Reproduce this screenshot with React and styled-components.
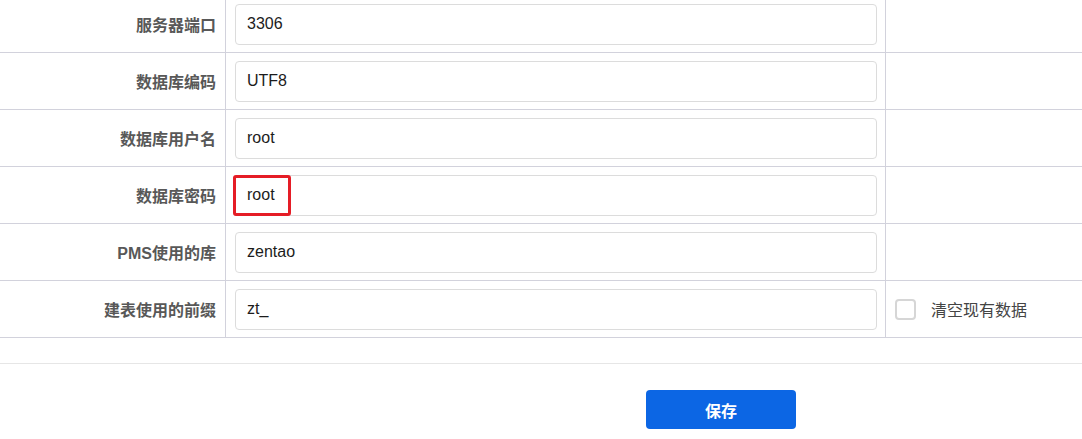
import styled, { createGlobalStyle } from 'styled-components';

const GlobalStyle = createGlobalStyle`
  html, body {
    margin: 0;
    padding: 0;
    background: #fff;
    overflow: hidden;
  }
  body {
    font-family: "Liberation Sans", "Noto Sans CJK SC", sans-serif;
  }
`;

const fields = [
  { label: '服务器端口', value: '3306' },
  { label: '数据库编码', value: 'UTF8' },
  { label: '数据库用户名', value: 'root' },
  { label: '数据库密码', value: 'root', marked: true },
  { label: 'PMS使用的库', value: 'zentao' },
  { label: '建表使用的前缀', value: 'zt_', clearOption: true },
];

function App() {
  return (
    <>
      <GlobalStyle />
      <Page>
        <Table>
          {fields.map((f, i) => (
            <Row key={f.label} first={i === 0}>
              <Label>{f.label}</Label>
              <InputCell>
                <InputWrap>
                  <Input defaultValue={f.value} />
                  {f.marked && <Mark />}
                </InputWrap>
              </InputCell>
              <Extra>
                {f.clearOption && (
                  <CheckLabel>
                    <CheckBox />
                    <span>清空现有数据</span>
                  </CheckLabel>
                )}
              </Extra>
            </Row>
          ))}
        </Table>
        <FootLine />
        <Actions>
          <SaveButton>保存</SaveButton>
        </Actions>
      </Page>
    </>
  );
}

export default App;

const Page = styled.div`
  width: 1082px;
  margin-top: -5px;
`;

const Table = styled.div`
  display: flex;
  flex-direction: column;
`;

const Row = styled.div`
  display: grid;
  grid-template-columns: 226px 660px 1fr;
  height: 57px;
  box-sizing: border-box;
  border-bottom: 1px solid #d2d2dc;
  ${({ first }) => (first ? 'border-top: 1px solid #d2d2dc; height: 58px;' : '')}
`;

const Label = styled.div`
  display: flex;
  align-items: center;
  justify-content: flex-end;
  padding-right: 9px;
  border-right: 1px solid #d2d2dc;
  box-sizing: border-box;
  font-size: 16px;
  font-weight: bold;
  color: #585858;
`;

const InputCell = styled.div`
  display: flex;
  align-items: center;
  padding: 0 8px 0 9px;
  border-right: 1px solid #d2d2dc;
  box-sizing: border-box;
`;

const InputWrap = styled.div`
  position: relative;
  width: 100%;
`;

const Input = styled.input`
  display: block;
  width: 100%;
  height: 41px;
  box-sizing: border-box;
  border: 1px solid #dcdcdc;
  border-radius: 4px;
  padding: 0 11px;
  font-family: "Liberation Sans", "Noto Sans CJK SC", sans-serif;
  font-size: 16px;
  color: #1c1c1c;
  background: #fff;
  outline: none;
`;

const Mark = styled.div`
  position: absolute;
  left: -2px;
  top: 0;
  width: 58px;
  height: 41px;
  box-sizing: border-box;
  border: 3px solid #e51d26;
  border-radius: 3px;
  pointer-events: none;
`;

const Extra = styled.div`
  display: flex;
  align-items: center;
  padding-left: 9px;
`;

const CheckLabel = styled.label`
  display: flex;
  align-items: center;
  gap: 15px;
  font-size: 16px;
  color: #444;
`;

const CheckBox = styled.span`
  display: block;
  width: 21px;
  height: 21px;
  box-sizing: border-box;
  border: 2px solid #d6d6d6;
  border-radius: 4px;
  background: #fff;
`;

const FootLine = styled.div`
  height: 25px;
  border-bottom: 1px solid #e6e6e6;
`;

const Actions = styled.div`
  display: flex;
  padding: 26px 0 0 646px;
`;

const SaveButton = styled.button`
  width: 150px;
  height: 39px;
  border: none;
  border-radius: 4px;
  background: #0c66e4;
  color: #fff;
  font-family: "Liberation Sans", "Noto Sans CJK SC", sans-serif;
  font-size: 16px;
  font-weight: bold;
  cursor: pointer;
`;
